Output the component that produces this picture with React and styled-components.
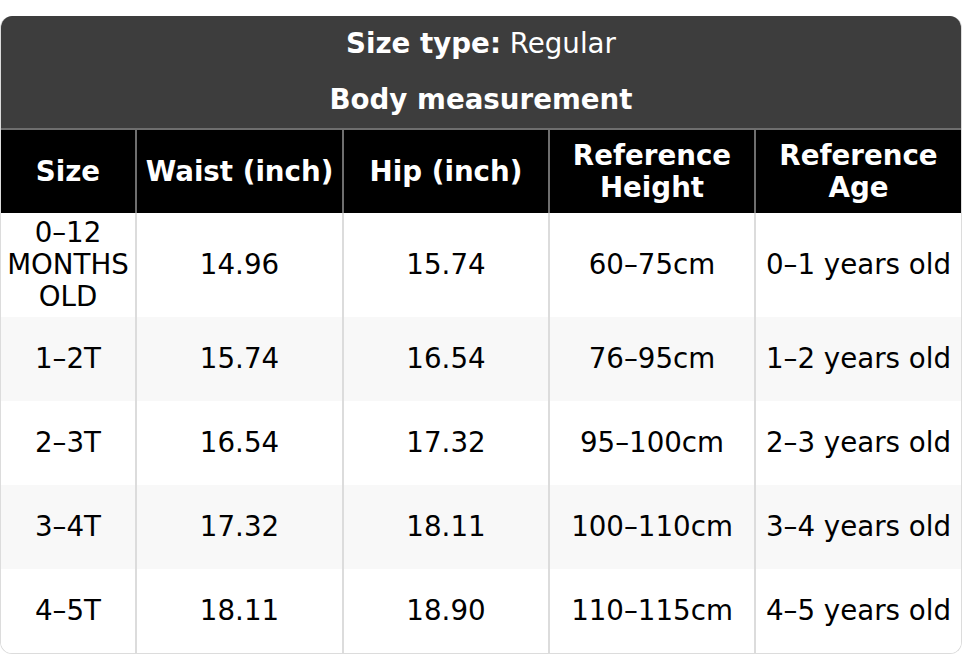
import React from "react";
import styled, { createGlobalStyle } from "styled-components";

const GlobalStyle = createGlobalStyle`
  html, body {
    margin: 0;
    padding: 0;
    background: #ffffff;
  }
  body {
    font-family: "DejaVu Sans", "Liberation Sans", sans-serif;
    color: #000000;
  }
`;

const columns = ["Size", "Waist (inch)", "Hip (inch)", "Reference Height", "Reference Age"];
const widths = [135, 207, 206, 206, 206];

const rows = [
  ["0–12 MONTHS OLD", "14.96", "15.74", "60–75cm", "0–1 years old"],
  ["1–2T", "15.74", "16.54", "76–95cm", "1–2 years old"],
  ["2–3T", "16.54", "17.32", "95–100cm", "2–3 years old"],
  ["3–4T", "17.32", "18.11", "100–110cm", "3–4 years old"],
  ["4–5T", "18.11", "18.90", "110–115cm", "4–5 years old"],
];

export default function App() {
  return (
    <>
      <GlobalStyle />
      <Page>
        <Card>
          <Table>
            <colgroup>
              {widths.map((w, i) => (
                <col key={i} style={{ width: w }} />
              ))}
            </colgroup>
            <thead>
              <tr>
                <Caption colSpan={5} $h={56}>
                  <strong>Size type:</strong> Regular
                </Caption>
              </tr>
              <tr>
                <Caption colSpan={5} $h={57} $bold>
                  Body measurement
                </Caption>
              </tr>
              <HeadRow>
                {columns.map((c) => (
                  <HeadCell key={c}>{c}</HeadCell>
                ))}
              </HeadRow>
            </thead>
            <tbody>
              {rows.map((r, i) => (
                <BodyRow key={i} $shaded={i % 2 === 1}>
                  {r.map((v, j) => (
                    <Cell key={j} $narrow={j === 0}>
                      {v}
                    </Cell>
                  ))}
                </BodyRow>
              ))}
            </tbody>
          </Table>
        </Card>
      </Page>
    </>
  );
}

const Page = styled.div`
  padding-top: 16px;
  width: 962px;
`;

const Card = styled.div`
  border: 1px solid #dcdcdc;
  border-top: none;
  border-radius: 12px;
  overflow: hidden;
`;

const Table = styled.table`
  width: 100%;
  border-collapse: collapse;
  table-layout: fixed;
  font-size: 27.7px;
  line-height: 32px;
`;

const Caption = styled.th`
  background: #3d3d3d;
  color: #ffffff;
  padding: 0;
  height: ${(p) => p.$h}px;
  box-sizing: border-box;
  text-align: center;
  vertical-align: middle;
  font-weight: ${(p) => (p.$bold ? 700 : 400)};

  strong {
    font-weight: 700;
  }
`;

const HeadRow = styled.tr`
  background: #000000;
  border-top: 2px solid #6e6e6e;
`;

const HeadCell = styled.th`
  color: #ffffff;
  font-weight: 700;
  height: 84px;
  padding: 0 6px;
  box-sizing: border-box;
  text-align: center;
  vertical-align: middle;
  border-left: 2px solid #6e6e6e;

  &:first-child {
    border-left: none;
  }
`;

const BodyRow = styled.tr`
  background: ${(p) => (p.$shaded ? "#f8f8f8" : "#ffffff")};
`;

const Cell = styled.td`
  height: 84px;
  padding: 4px ${(p) => (p.$narrow ? "0" : "6px")};
  box-sizing: border-box;
  text-align: center;
  vertical-align: middle;
  font-weight: 400;
  border-left: 2px solid #dcdcdc;

  &:first-child {
    border-left: none;
  }
`;
